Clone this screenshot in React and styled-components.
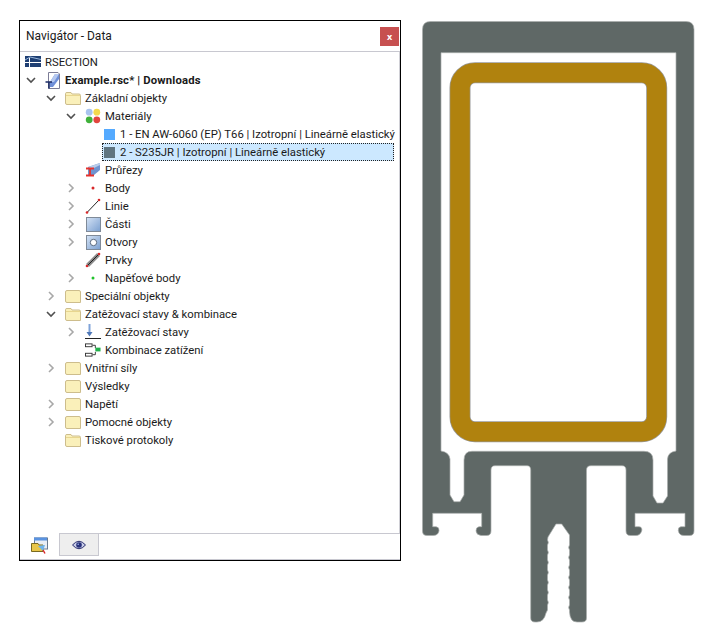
import React from "react";
import styled, { createGlobalStyle } from "styled-components";

const GlobalStyle = createGlobalStyle`
  html, body {
    margin: 0;
    background: #fff;
  }
  body {
    font-family: Roboto, "Noto Sans", sans-serif;
    color: #1a1a1a;
  }
`;

// saw-tooth edge of the slot in the stem
const teeth = (x, from, to, out) => {
  let d = "";
  const dir = to > from ? 1 : -1;
  for (let y = from; dir > 0 ? y < to : y > to; y += 10 * dir) {
    d += ` L${x} ${y} Q${x + out} ${y + 2.5 * dir} ${x} ${y + 5 * dir} L${x} ${y + 10 * dir}`;
  }
  return d;
};

const PROFILE = `
  M430.5 21.5 H686 Q694 21.5 694 29.5 V531 Q694 535.5 689.5 535.5 H684 Q679 535.5 678.3 530.5 Q678 527 681 526.7 H685 V513.3
  H635 V526.7 H639 Q642.5 527 641.7 531 Q640 535.5 636 535.5 H630.5 Q626 535.5 626 531 V470 Q626 465.7 622 465.7 H591
  Q586.5 465.7 586.5 470 V618 Q586.5 622 582 622 H577 Q570 622 569.5 612
  ${teeth(569.5, 610, 540, -1.6)} L569.5 535 L561.7 524 H556 L548 537
  ${teeth(547.5, 540, 610, 1.6)} L546 613 Q544 622 537 622 H535 Q530.7 622 530.7 618 V470 Q530.7 465.7 527 465.7 H495 Q491 465.7 491 470
  V531 Q491 535.5 486.5 535.5 H481 Q476.5 535 476 531 Q476 527 479 526.7 H481.7 V513.3
  H432.7 V526.7 H436 Q439.5 527 439 531 Q438 535.5 433 535.5 H427 Q422.5 535.5 422.5 531 V29.5 Q422.5 21.5 430.5 21.5 Z
  M441 52.7 V451 Q449 452 450 459 V495 L454 501.7 H460 L464 495 V460 Q464 451.3 472 451.3 H644 Q653 451.3 653 460 V496
  L657 503 H663 L667.5 496 V459 Q668 452 676 451 V52.7 Z
`;

const Page = styled.div`
  display: flex;
  align-items: flex-start;
  padding: 20px 0 0 19px;
`;

const Panel = styled.section`
  width: 380px;
  height: 539px;
  border: 1px solid #000;
  display: flex;
  flex-direction: column;
  background: #fff;
`;

const TitleBar = styled.header`
  height: 30px;
  flex: none;
  display: flex;
  align-items: center;
  justify-content: space-between;
  border-bottom: 1px solid #c8c8d0;
  padding-left: 6px;
  font-size: 12px;
`;

const CloseButton = styled.button`
  width: 19px;
  height: 19px;
  margin: 0 1px 0 0;
  padding: 0;
  border: none;
  background: #c75050;
  color: #fff;
  font: bold 9px "Noto Sans", sans-serif;
  line-height: 17px;
`;

const Tree = styled.div`
  flex: 1;
  padding-top: 1px;
  border-right: 1px solid #d0d0d6;
`;

const Row = styled.div`
  height: 18px;
  display: flex;
  align-items: center;
  padding-left: ${(p) => 1 + p.$level * 20}px;
  font-size: 11.3px;
  white-space: nowrap;
`;

const Chevron = styled.span`
  width: 20px;
  flex: none;
  display: flex;
  justify-content: center;
  align-items: center;
`;

const Entry = styled.div`
  flex: 1;
  height: 18px;
  box-sizing: border-box;
  display: flex;
  align-items: center;
  gap: ${(p) => (p.$small ? 5 : 4)}px;
  margin: 0 5px 0 ${(p) => (p.$small ? 1 : 0)}px;
  padding-left: ${(p) => (p.$small ? 1 : 4)}px;
  border: 1px dotted ${(p) => (p.$selected ? "#222" : "transparent")};
  border-left-width: ${(p) => (p.$small ? 1 : 0)}px;
  background: ${(p) => (p.$selected ? "#cce8ff" : "transparent")};
`;

const IconSlot = styled.span`
  width: ${(p) => (p.$small ? 11 : 16)}px;
  height: 16px;
  flex: none;
  display: flex;
  align-items: center;
  justify-content: center;
`;

const Label = styled.span`
  font-weight: ${(p) => (p.$bold ? 700 : 400)};
  letter-spacing: ${(p) => (p.$bold ? 0.15 : 0)}px;
`;

const TabBar = styled.nav`
  height: 27px;
  flex: none;
  display: flex;
  align-items: flex-start;
  border-bottom: 1px solid #c8c8d0;
  box-sizing: border-box;
  background: linear-gradient(#c8c8d0, #c8c8d0) top right / 341px 1px no-repeat;
`;

const Tab = styled.div`
  width: ${(p) => (p.$active ? 39 : 40)}px;
  height: ${(p) => (p.$active ? 26 : 23)}px;
  box-sizing: border-box;
  display: flex;
  align-items: center;
  justify-content: center;
  padding-bottom: ${(p) => (p.$active ? 2 : 0)}px;
  background: ${(p) => (p.$active ? "#fff" : "#eeeeee")};
  border: ${(p) => (p.$active ? "none" : "1px solid #c8c8d0")};
`;

const Drawing = styled.svg`
  display: block;
  flex: none;
  margin: -2px 0 0 19px;
`;

const Closed = () => (
  <svg width="8" height="10" viewBox="0 0 8 10">
    <path d="M2 1l4 4-4 4" fill="none" stroke="#a8a8a8" strokeWidth="1.6" />
  </svg>
);

const Open = () => (
  <svg width="10" height="8" viewBox="0 0 10 8">
    <path d="M1 2l4 4 4-4" fill="none" stroke="#505050" strokeWidth="1.6" />
  </svg>
);

const FolderIcon = ({ open }) => (
  <svg width="16" height="13" viewBox="0 0 16 13">
    <path
      d={open ? "M.5 3V1.500Q.5 .5 2 .5H6L7 2H14Q15.500 2 15.500 3.500V12.500H2Q.5 12.500 .5 11Z" : "M.5 2Q.5 .5 2 .5H14Q15.500 .5 15.500 2V12.500H2Q.5 12.500 .5 11Z"}
      fill="#faf0ba"
      stroke="#cdbd8c"
    />
    {open && <path d="M1 3.500H15" stroke="#e8d68f" />}
  </svg>
);

const FlagIcon = () => (
  <svg width="16" height="12" viewBox="0 0 16 12">
    <rect width="16" height="11" fill="#1f3f73" />
    <path d="M0 4L5 1 16 3.500" fill="none" stroke="#9bb8dc" />
    <path d="M0 6.500H16M4.500 2V12" stroke="#fff" />
  </svg>
);

const DocIcon = () => (
  <svg width="16" height="17" viewBox="0 0 16 17">
    <path d="M3.500 .5H13L14.500 2V16.500H3.500Z" fill="#fff" stroke="#7c7c96" />
    <path d="M5 10L10 2h4v5L8 15H5Z" fill="#6f8fd8" />
    <path d="M10 2h4L9 10H5Z" fill="#b5c8f0" />
    <path d="M.5 10H7M4 10v6.500" stroke="#1c2c66" strokeWidth="1.6" fill="none" />
  </svg>
);

const MaterialsIcon = () => (
  <svg width="16" height="16" viewBox="0 0 16 16">
    <circle cx="4.200" cy="4.200" r="3.400" fill="#a9c4ee" />
    <circle cx="11.800" cy="4.200" r="3.400" fill="#f3d94c" />
    <circle cx="4.200" cy="11.800" r="3.400" fill="#3fb13a" />
    <circle cx="11.800" cy="11.800" r="3.400" fill="#e2453e" />
  </svg>
);

const SwatchIcon = ({ color }) => (
  <svg width="11" height="11" viewBox="0 0 11 11">
    <rect width="11" height="11" fill={color} />
  </svg>
);

const SectionsIcon = () => (
  <svg width="16" height="14" viewBox="0 0 16 14">
    <path d="M3 4L15 0v7L9 12H3Z" fill="#6f94d0" />
    <path d="M3 4L15 0v2L7 6Z" fill="#b9cdea" />
    <path d="M1 5.500H9M5 5.500V12M1 12.500H9" stroke="#e5322d" strokeWidth="1.800" fill="none" />
  </svg>
);

const DotIcon = ({ color }) => (
  <svg width="16" height="16" viewBox="0 0 16 16">
    <circle cx="8" cy="8" r="1.500" fill={color} />
  </svg>
);

const LineIcon = () => (
  <svg width="16" height="16" viewBox="0 0 16 16">
    <path d="M2 14.500L14 2" stroke="#222" />
    <circle cx="2" cy="14.500" r="1.300" fill="#d8282a" />
    <circle cx="14" cy="2" r="1.300" fill="#d8282a" />
  </svg>
);

const PartIcon = ({ hole }) => (
  <svg width="15" height="15" viewBox="0 0 15 15">
    <defs>
      <linearGradient id="partFill" x1="0" y1="0" x2="1" y2="1">
        <stop offset="0" stopColor="#d5e3f5" />
        <stop offset="1" stopColor="#7a9fd0" />
      </linearGradient>
    </defs>
    <rect x=".5" y=".5" width="14" height="14" fill="url(#partFill)" stroke="#7f8a98" />
    {hole && <circle cx="7.500" cy="7.500" r="3.200" fill="#fff" stroke="#5a6a80" />}
  </svg>
);

const MemberIcon = () => (
  <svg width="16" height="16" viewBox="0 0 16 16">
    <path d="M2.500 13.500L13.500 2.500" stroke="#8a8a8a" strokeWidth="4" />
    <path d="M2.500 13.500L13.500 2.500" stroke="#222" />
    <circle cx="2" cy="14" r="1.300" fill="#d8282a" />
    <circle cx="14" cy="2" r="1.300" fill="#d8282a" />
  </svg>
);

const LoadIcon = () => (
  <svg width="16" height="16" viewBox="0 0 16 16">
    <path d="M4.500 0V10" stroke="#7fa3d8" strokeWidth="2" />
    <path d="M1.500 8L4.500 12.500 7.500 8Z" fill="#4f78b8" />
    <path d="M0 14.500H16" stroke="#222" />
  </svg>
);

const CombinationIcon = () => (
  <svg width="17" height="16" viewBox="0 0 17 16">
    <rect x=".5" y="1.500" width="7" height="3" fill="#fff" stroke="#333" />
    <rect x=".5" y="11.500" width="7" height="3" fill="#fff" stroke="#333" />
    <path d="M8 3H11V6M8 13H11V10" fill="none" stroke="#333" />
    <rect x="11" y="5.500" width="5.500" height="4" fill="#22b14c" />
  </svg>
);

const NavigatorTabIcon = () => (
  <svg width="17" height="17" viewBox="0 0 17 17">
    <rect x="3.500" y="1" width="13" height="11" fill="#e8edf5" stroke="#6a7a90" />
    <rect x="3" y=".5" width="13" height="3" fill="#5a93e0" />
    <path d="M.5 6.500H7L8 8H12V14.500H.5Z" fill="#e9c648" stroke="#7a6a20" />
    <path d="M7 9L14 8 12 14Z" fill="#6fb4ee" />
    <path d="M12 13L14 16.500" stroke="#d8282a" strokeWidth="1.500" />
  </svg>
);

const EyeIcon = () => (
  <svg width="14" height="10" viewBox="0 0 14 10">
    <path d="M.5 5Q7 -2.500 13.500 5Q7 12.500 .5 5Z" fill="#c8cce8" stroke="#2a2f6e" />
    <circle cx="7" cy="5" r="2.800" fill="#27307a" />
    <circle cx="6.200" cy="4.200" r=".8" fill="#9fb4ea" />
  </svg>
);

const rows = [
  { level: -1, icon: <FlagIcon />, text: "RSECTION" },
  { level: 0, chevron: "open", icon: <DocIcon />, text: "Example.rsc* | Downloads", bold: true },
  { level: 1, chevron: "open", icon: <FolderIcon open />, text: "Základní objekty" },
  { level: 2, chevron: "open", icon: <MaterialsIcon />, text: "Materiály" },
  { level: 3, small: true, icon: <SwatchIcon color="#55aaff" />, text: "1 - EN AW-6060 (EP) T66 | Izotropní | Lineárně elastický" },
  { level: 3, small: true, selected: true, icon: <SwatchIcon color="#5f7480" />, text: "2 - S235JR | Izotropní | Lineárně elastický" },
  { level: 2, icon: <SectionsIcon />, text: "Průřezy" },
  { level: 2, chevron: "closed", icon: <DotIcon color="#d8282a" />, text: "Body" },
  { level: 2, chevron: "closed", icon: <LineIcon />, text: "Linie" },
  { level: 2, chevron: "closed", icon: <PartIcon />, text: "Části" },
  { level: 2, chevron: "closed", icon: <PartIcon hole />, text: "Otvory" },
  { level: 2, icon: <MemberIcon />, text: "Prvky" },
  { level: 2, chevron: "closed", icon: <DotIcon color="#22c22c" />, text: "Napěťové body" },
  { level: 1, chevron: "closed", icon: <FolderIcon />, text: "Speciální objekty" },
  { level: 1, chevron: "open", icon: <FolderIcon open />, text: "Zatěžovací stavy & kombinace" },
  { level: 2, chevron: "closed", icon: <LoadIcon />, text: "Zatěžovací stavy" },
  { level: 2, icon: <CombinationIcon />, text: "Kombinace zatížení" },
  { level: 1, chevron: "closed", icon: <FolderIcon />, text: "Vnitřní síly" },
  { level: 1, icon: <FolderIcon />, text: "Výsledky" },
  { level: 1, chevron: "closed", icon: <FolderIcon />, text: "Napětí" },
  { level: 1, chevron: "closed", icon: <FolderIcon />, text: "Pomocné objekty" },
  { level: 1, icon: <FolderIcon open />, text: "Tiskové protokoly" },
];

const App = () => (
  <>
    <GlobalStyle />
    <Page>
      <Panel>
        <TitleBar>
          Navigátor - Data
          <CloseButton>x</CloseButton>
        </TitleBar>
        <Tree>
          {rows.map((r) => (
            <Row key={r.text} $level={Math.max(r.level, 0)}>
              {r.level >= 0 && (
                <Chevron>
                  {r.chevron === "open" && <Open />}
                  {r.chevron === "closed" && <Closed />}
                </Chevron>
              )}
              <Entry $small={r.small} $selected={r.selected}>
                <IconSlot $small={r.small}>{r.icon}</IconSlot>
                <Label $bold={r.bold}>{r.text}</Label>
              </Entry>
            </Row>
          ))}
        </Tree>
        <TabBar>
          <Tab $active>
            <NavigatorTabIcon />
          </Tab>
          <Tab>
            <EyeIcon />
          </Tab>
        </TabBar>
      </Panel>
      <Drawing width="278" height="606" viewBox="420 18 278 606">
        <path d={PROFILE} fill="#5f6866" fillRule="evenodd" stroke="#a9adac" strokeWidth="0.7" />
        <rect x="460" y="72.7" width="196.7" height="359" rx="15" fill="none" stroke="#999" strokeWidth="21" />
        <rect x="460" y="72.7" width="196.7" height="359" rx="15" fill="none" stroke="#b0820e" strokeWidth="19.5" />
      </Drawing>
    </Page>
  </>
);

export default App;
